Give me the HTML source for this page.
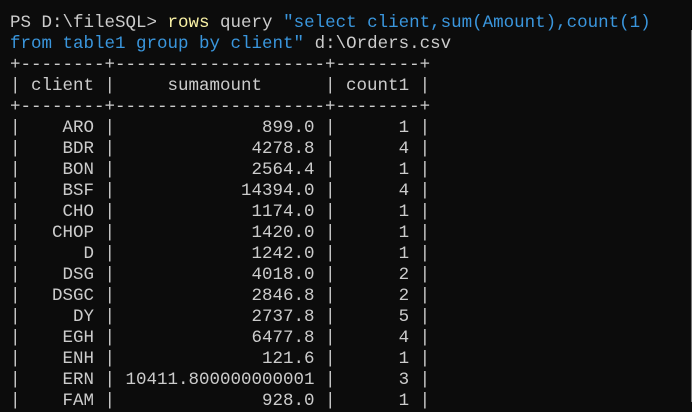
<!DOCTYPE html>
<html><head><meta charset="utf-8"><style>
html,body{margin:0;padding:0;background:#0c0c0c;width:692px;height:402px;overflow:hidden}
pre{position:absolute;left:10px;top:12.5px;margin:0;font-family:"Liberation Mono",monospace;font-size:17.5px;line-height:21px;color:#cccccc;white-space:pre}
.y{color:#f9f1a5}.b{color:#3a96dd}
.edge{position:absolute;right:0;top:30px;width:1px;height:372px;background:#777}
</style></head><body>
<pre>PS D:\fileSQL&gt; <span class="y">rows</span> query <span class="b">"select client,sum(Amount),count(1)</span>
<span class="b">from table1 group by client"</span> d:\Orders.csv
+--------+--------------------+--------+
| client |     sumamount      | count1 |
+--------+--------------------+--------+
|    ARO |              899.0 |      1 |
|    BDR |             4278.8 |      4 |
|    BON |             2564.4 |      1 |
|    BSF |            14394.0 |      4 |
|    CHO |             1174.0 |      1 |
|   CHOP |             1420.0 |      1 |
|      D |             1242.0 |      1 |
|    DSG |             4018.0 |      2 |
|   DSGC |             2846.8 |      2 |
|     DY |             2737.8 |      5 |
|    EGH |             6477.8 |      4 |
|    ENH |              121.6 |      1 |
|    ERN | 10411.800000000001 |      3 |
|    FAM |              928.0 |      1 |</pre>
<div class="edge"></div>
</body></html>
